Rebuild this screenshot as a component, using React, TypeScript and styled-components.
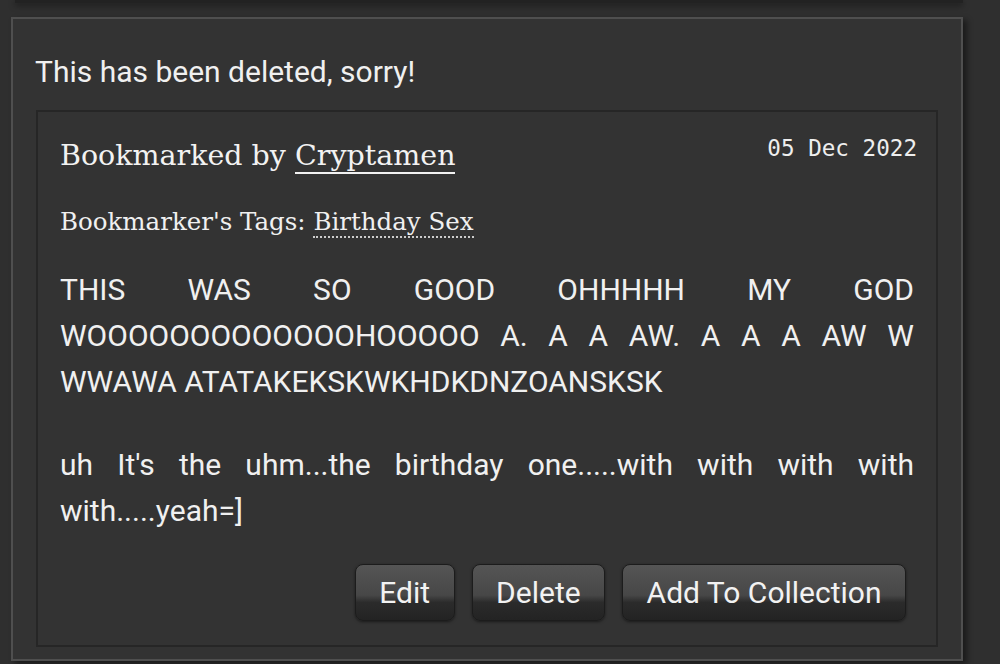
import React from "react";
import styled, { createGlobalStyle } from "styled-components";

const Global = createGlobalStyle`
  html, body { margin: 0; padding: 0; background: #2f2f2f; }
  body { font-family: Roboto, "Liberation Sans", sans-serif; color: #eeeeee; width: 1000px; height: 664px; overflow: hidden; }
`;

const Page = styled.div`
  display: flex;
  flex-direction: column;
  padding: 0 37px 0 11px;
`;

const PrevBox = styled.div`
  height: 3px;
  margin: 0 0 0 4px;
  background: #222;
  box-shadow: 0 2px 6px rgba(0, 0, 0, 0.6);
`;

const Outer = styled.section`
  margin-top: 14px;
  background: #333333;
  border: 2px solid #4f4f4f;
  box-shadow: 4px 3px 6px rgba(0, 0, 0, 0.45);
  padding: 32px 23px 12px 23px;
`;

const Notice = styled.p`
  margin: 0 0 17px -1px;
  font-size: 30px;
  line-height: 42px;
  color: #f0f0f0;
`;

const Inner = styled.article`
  border: 2px solid #262626;
  background: #333;
  padding: 23px 22px 24px 22px;
`;

const Header = styled.div`
  display: flex;
  justify-content: space-between;
  align-items: flex-start;
`;

const Title = styled.h2`
  margin: 0;
  font-family: "DejaVu Serif", "Liberation Serif", serif;
  font-weight: normal;
  font-size: 28.5px;
  line-height: 42px;
  color: #f2f2f2;
`;

const UserLink = styled.a`
  color: #f2f2f2;
  text-decoration: none;
  border-bottom: 2px solid #f2f2f2;
`;

const DateText = styled.span`
  font-family: "DejaVu Sans Mono", "Liberation Mono", monospace;
  font-size: 22.6px;
  line-height: 26px;
  color: #eee;
  margin-right: -3px;
`;

const Tags = styled.p`
  margin: 28px 0 0;
  font-family: "DejaVu Serif", "Liberation Serif", serif;
  font-size: 24.5px;
  line-height: 34px;
  color: #f0f0f0;
`;

const TagLink = styled.a`
  color: #f0f0f0;
  text-decoration: none;
  border-bottom: 2px dotted #ccc;
`;

const Body = styled.p`
  margin: 28px 0 0;
  font-size: 30px;
  line-height: 46px;
  text-align: justify;
  color: #f0f0f0;
  & + & { margin-top: 37px; }
`;

const Actions = styled.div`
  display: flex;
  justify-content: flex-end;
  gap: 17px;
  margin-top: 30px;
  padding-right: 8px;
`;

const Button = styled.button`
  font-family: Roboto, "Liberation Sans", sans-serif;
  font-size: 30px;
  color: #f2f2f2;
  height: 57px;
  padding: 0 23.5px;
  border-radius: 8px;
  border: 1px solid #1c1c1c;
  background: linear-gradient(
    to bottom,
    #555555 0%,
    #474747 55%,
    #2b2b2b 68%,
    #232323 100%
  );
  box-shadow: 0 1px 3px rgba(0, 0, 0, 0.5);
`;

export default function App() {
  return (
    <>
      <Global />
      <Page>
        <PrevBox />
        <Outer>
          <Notice>This has been deleted, sorry!</Notice>
          <Inner>
            <Header>
              <Title>
                Bookmarked by <UserLink href="#">Cryptamen</UserLink>
              </Title>
              <DateText>05 Dec 2022</DateText>
            </Header>
            <Tags>
              Bookmarker's Tags: <TagLink href="#">Birthday Sex</TagLink>
            </Tags>
            <Body>
              THIS WAS SO GOOD OHHHHH MY GOD WOOOOOOOOOOOOOHOOOOO A. A A AW. A A A AW W
              WWAWA ATATAKEKSKWKHDKDNZOANSKSK
            </Body>
            <Body>uh It's the uhm...the birthday one.....with with with with with.....yeah=]</Body>
            <Actions>
              <Button>Edit</Button>
              <Button>Delete</Button>
              <Button>Add To Collection</Button>
            </Actions>
          </Inner>
        </Outer>
      </Page>
    </>
  );
}
